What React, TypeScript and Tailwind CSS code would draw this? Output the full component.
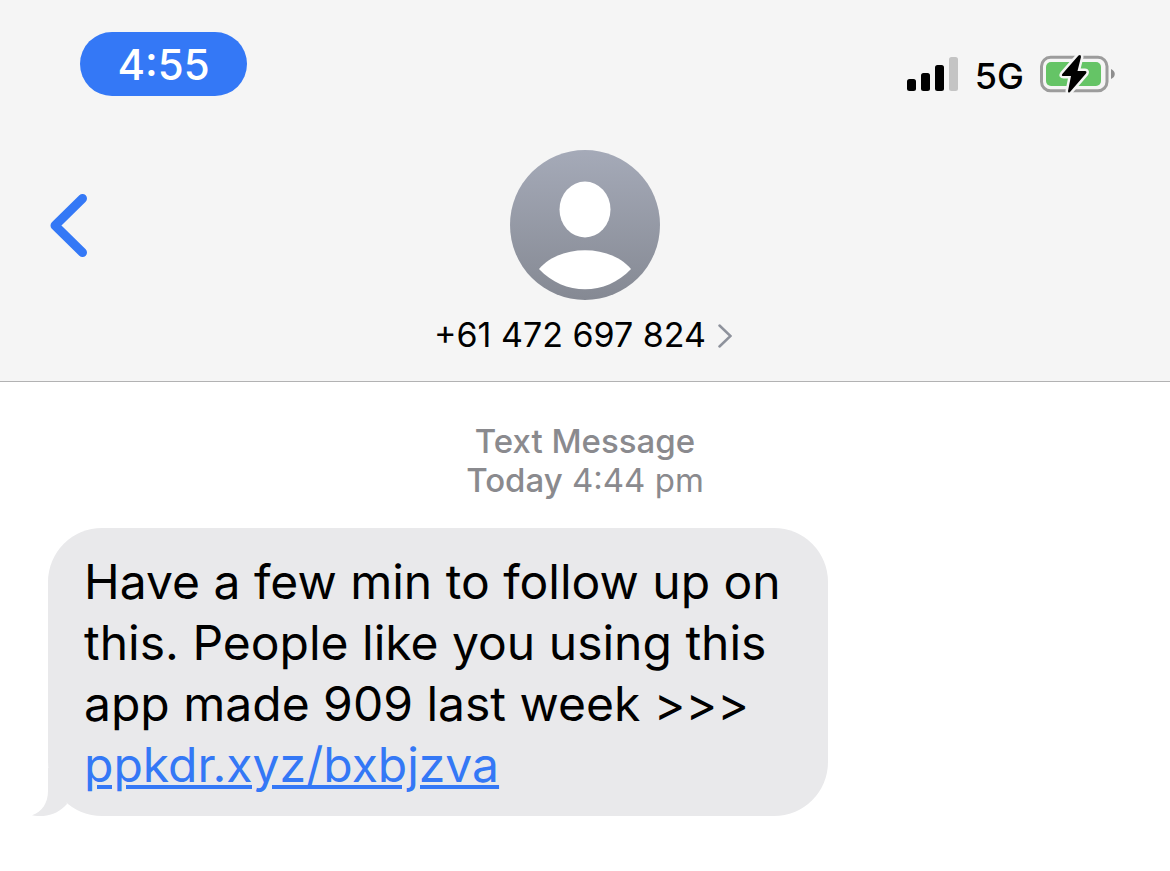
export default function App() {
  return (
    <main className="min-h-screen bg-white font-['Inter',sans-serif] text-black">
      <header className="border-b border-[#b2b2b3] bg-[#f5f5f5] pt-8 pb-6">
        <div className="flex items-start justify-between pr-[54px] pl-20">
          <time className="flex h-16 w-[167px] items-center justify-center rounded-full bg-[#3478f6] text-[42px] font-medium text-white">4:55</time>
          <div className="flex items-center gap-4 pt-5">
            <svg aria-label="Signal strength" className="h-9 w-[52px]" viewBox="0 0 52 36">
              <rect x="0" y="23" width="9" height="12" rx="2.5" />
              <rect x="14" y="17" width="9" height="18" rx="2.5" />
              <rect x="28" y="9" width="9" height="26" rx="2.5" />
              <rect x="42" y="1" width="9" height="34" rx="2.5" fill="#c4c4c4" />
            </svg>
            <span className="pt-1 text-[36px] leading-10 font-medium">5G</span>
            <svg aria-label="Battery charging" className="h-10 w-[76px]" viewBox="0 0 76 40">
              <rect x="1.5" y="3.3" width="65.5" height="33.5" rx="9" fill="none" stroke="#9c9c9c" strokeWidth="3" />
              <path d="M71 15c5 2 5 8 0 10z" fill="#8e8e8e" />
              <rect x="6" y="8" width="55" height="24" rx="5" fill="#65c466" />
              <path
                d="M38.5 1.5 22.3 20Q21 22 23.5 22H31L28 37Q28 39.5 30 38L46 19.5Q47.3 17 45 17H37.5L41 3Q41 0 38.5 1.5Z"
                stroke="#f5f5f5"
                strokeWidth="5"
                strokeLinejoin="round"
                paintOrder="stroke"
              />
            </svg>
          </div>
        </div>
        <div className="grid grid-cols-[1fr_auto_1fr] items-start px-12 pt-[54px]">
          <button aria-label="Back" className="mt-11 w-10">
            <svg className="h-16 w-10" viewBox="0 0 40 64" fill="none">
              <path d="M34.5 4.5 7 31.5l27.5 27" stroke="#3478f6" strokeWidth="9" strokeLinecap="round" strokeLinejoin="round" />
            </svg>
          </button>
          <button className="flex w-[150px] flex-col items-center">
            <svg aria-hidden="true" className="size-[150px]" viewBox="0 0 150 150">
              <defs>
                <linearGradient id="avatar" x2="0" y2="1">
                  <stop stopColor="#a5aab8" />
                  <stop offset="1" stopColor="#858993" />
                </linearGradient>
              </defs>
              <circle cx="75" cy="75" r="75" fill="url(#avatar)" />
              <ellipse cx="75" cy="59.5" rx="25.5" ry="28" fill="white" />
              <path d="M29 119C50 94 100 94 121 119 96 146 54 146 29 119Z" fill="white" />
            </svg>
            <span className="mt-3 flex items-center gap-3 pr-1 text-[34px] leading-[45px] whitespace-nowrap">
              +61 472 697 824
              <svg aria-hidden="true" className="mt-0.5 h-6 w-3.5 shrink-0" viewBox="0 0 14 24" fill="none">
                <path d="m1.5 1.5 11 10.5-11 10.5" stroke="#8e929c" strokeWidth="2.5" strokeLinecap="round" />
              </svg>
            </span>
          </button>
        </div>
      </header>
      <section className="pt-10">
        <div className="text-center text-[33px] leading-[39px] text-[#8a8a8e]">
          <h1 className="font-medium">Text Message</h1>
          <p><span className="font-medium">Today</span> 4:44 pm</p>
        </div>
        <div className="relative mt-7 ml-12 w-fit max-w-[780px] rounded-[54px] bg-[#e9e9eb] px-9 pt-[23px] pb-[21px] text-[48px] leading-[61px]">
          <svg aria-hidden="true" className="absolute bottom-0 -left-4 h-12 w-10" viewBox="0 0 40 48" fill="#e9e9eb">
            <path d="M16 0V23C16 35 10 44 0 47.3 14 50 26 46 35 36L24 0Z" />
          </svg>
          <p className="relative">
            Have a few min to follow up on this. People like you using this app made 909 last week &gt;&gt;&gt;{' '}
            <a href="#message-link" className="block text-[#3478f6] underline">ppkdr.xyz/bxbjzva</a>
          </p>
        </div>
      </section>
    </main>
  );
}
